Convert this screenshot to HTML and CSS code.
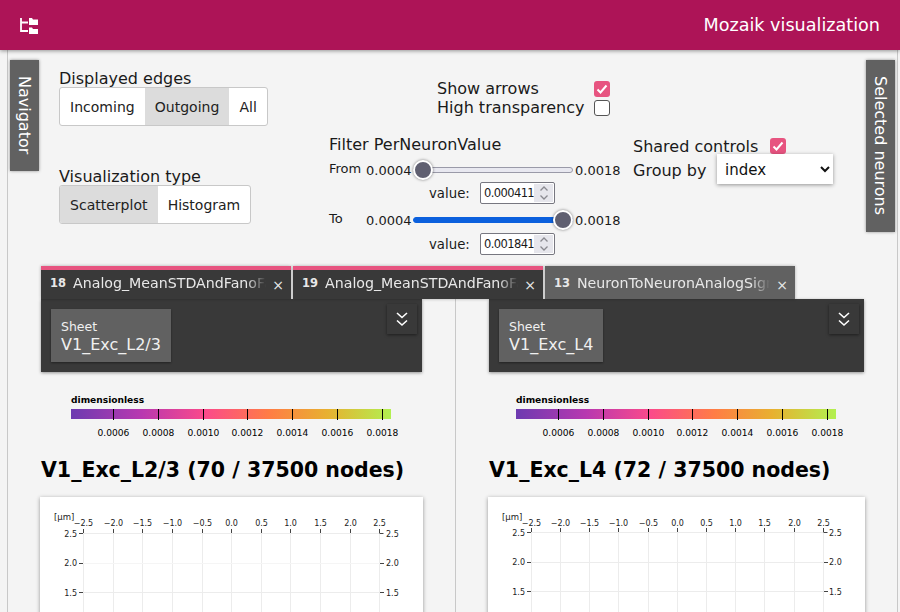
FILE: index.html
```html
<!DOCTYPE html>
<html lang="en">
<head>
    <meta charset="UTF-8">
    <meta name="viewport" content="width=device-width, initial-scale=1.0">
    <title>Mozaik visualization</title>
    <link rel="stylesheet" href="styles.css">
</head>
<body>
    <header class="topbar">
        <svg class="topbar-icon" width="20" height="18" viewBox="0 0 20 18">
            <path d="M2 1v13h7M2 5.500h7" fill="none" stroke="#fff" stroke-width="1.800"/>
            <path d="M10 1h3l1 1.500h5V8H10zM10 10.500h3l1 1.500h5v5H10z" fill="#fff"/>
        </svg>
        <div class="topbar-title">Mozaik visualization</div>
    </header>

    <div class="workspace">
        <div class="rail rail-left"><div class="side-tab">Navigator</div></div>

        <div class="main">
            <div class="controls">
                <div class="controls-col">
                    <div class="control-label">Displayed edges</div>
                    <div class="btn-group">
                        <div class="btn">Incoming</div>
                        <div class="btn active">Outgoing</div>
                        <div class="btn">All</div>
                    </div>
                    <div class="control-label second">Visualization type</div>
                    <div class="btn-group">
                        <div class="btn active">Scatterplot</div>
                        <div class="btn">Histogram</div>
                    </div>
                </div>

                <div class="controls-col filter-col">
                    <div class="check-row">
                        <span class="check-label">Show arrows</span>
                        <span class="checkbox checked"><svg width="16" height="16" viewBox="0 0 16 16"><path d="M3.500 8.500l3 3 6-7" fill="none" stroke="#fff" stroke-width="2"/></svg></span>
                    </div>
                    <div class="check-row">
                        <span class="check-label">High transparency</span>
                        <span class="checkbox"></span>
                    </div>
                    <div class="filter-title">Filter PerNeuronValue</div>

                    <div class="slider-row">
                        <span class="slider-name">From</span>
                        <span class="slider-min">0.0004</span>
                        <div class="slider"><div class="thumb thumb-start"></div></div>
                        <span class="slider-max">0.0018</span>
                    </div>
                    <div class="value-row">
                        <span class="value-label">value:</span>
                        <div class="num-input">
                            <span class="num-text">0.000411</span>
                            <span class="num-spin"><svg width="12" height="18" viewBox="0 0 12 18"><path d="M2.500 6.500L6 3l3.500 3.500M2.500 11.500L6 15l3.500-3.500" fill="none" stroke="#8a8a90" stroke-width="1.300"/></svg></span>
                        </div>
                    </div>

                    <div class="slider-row to-row">
                        <span class="slider-name">To</span>
                        <span class="slider-min">0.0004</span>
                        <div class="slider blue"><div class="thumb thumb-end"></div></div>
                        <span class="slider-max">0.0018</span>
                    </div>
                    <div class="value-row last-value">
                        <span class="value-label">value:</span>
                        <div class="num-input">
                            <span class="num-text">0.001841</span>
                            <span class="num-spin"><svg width="12" height="18" viewBox="0 0 12 18"><path d="M2.500 6.500L6 3l3.500 3.500M2.500 11.500L6 15l3.500-3.500" fill="none" stroke="#8a8a90" stroke-width="1.300"/></svg></span>
                        </div>
                    </div>
                </div>

                <div class="controls-col shared-col">
                    <div class="shared-row">
                        <span>Shared controls</span>
                        <span class="checkbox checked"><svg width="16" height="16" viewBox="0 0 16 16"><path d="M3.500 8.500l3 3 6-7" fill="none" stroke="#fff" stroke-width="2"/></svg></span>
                    </div>
                    <div class="group-row">
                        <span>Group by</span>
                        <select class="group-select"><option>index</option></select>
                    </div>
                </div>
            </div>

            <div class="tabs">
                <div class="tab selected">
                    <span class="tab-num">18</span><span class="tab-title">Analog_MeanSTDAndFanoFactor</span><span class="tab-close">×</span>
                </div>
                <div class="tab selected">
                    <span class="tab-num">19</span><span class="tab-title">Analog_MeanSTDAndFanoFactor</span><span class="tab-close">×</span>
                </div>
                <div class="tab">
                    <span class="tab-num">13</span><span class="tab-title">NeuronToNeuronAnalogSignal</span><span class="tab-close">×</span>
                </div>
            </div>

            <div class="panes">
                <section class="pane pane-first">
                    <div class="pane-head">
                        <div class="sheet-box">
                            <div class="sheet-caption">Sheet</div>
                            <div class="sheet-name">V1_Exc_L2/3</div>
                        </div>
                        <div class="collapse-btn"><svg width="12" height="15" viewBox="0 0 12 15"><path d="M1 1l5 4.500L11 1M1 8.500l5 4.500 5-4.500" fill="none" stroke="#fff" stroke-width="1.600"/></svg></div>
                    </div>
                    <svg class="colorbar" width="382" height="62" viewBox="41 386 382 62">
                        <defs>
                            <linearGradient id="cbar1">
                                <stop offset="0" stop-color="#6d3bb0"/>
                                <stop offset="0.22" stop-color="#b838b0"/>
                                <stop offset="0.42" stop-color="#fb4a8a"/>
                                <stop offset="0.62" stop-color="#ff7d45"/>
                                <stop offset="0.8" stop-color="#e8b030"/>
                                <stop offset="1" stop-color="#b2f050"/>
                            </linearGradient>
                        </defs>
                        <text class="cbar-unit" x="71" y="403">dimensionless</text>
                        <rect x="71" y="409" width="320" height="10" fill="url(#cbar1)"/>
                        <path d="M113.500 409v11M158.500 409v11M203.500 409v11M247.500 409v11M292.500 409v11M337.500 409v11M382.500 409v11" stroke="#000"/>
                        <text class="cbar-tick" x="113.500" y="436">0.0006</text>
                        <text class="cbar-tick" x="158.500" y="436">0.0008</text>
                        <text class="cbar-tick" x="203.500" y="436">0.0010</text>
                        <text class="cbar-tick" x="247.500" y="436">0.0012</text>
                        <text class="cbar-tick" x="292.500" y="436">0.0014</text>
                        <text class="cbar-tick" x="337.500" y="436">0.0016</text>
                        <text class="cbar-tick" x="382.500" y="436">0.0018</text>
                    </svg>
                    <h2 class="pane-title">V1_Exc_L2/3 (70 / 37500 nodes)</h2>
                    <div class="plot-card">
                        <svg class="plot" width="383" height="300" viewBox="40 497 383 300">
                            <path class="grid" d="M83.500 533v280M113.500 533v280M142.500 533v280M172.500 533v280M202.500 533v280M231.500 533v280M261.500 533v280M290.500 533v280M320.500 533v280M350.500 533v280M379.500 533v280M83 533.500h297M83 592.500h297"/>
                            <path class="grid faint" d="M83 563.500h297"/>
                            <path class="axis" d="M83.500 529v4M113.500 529v4M142.500 529v4M172.500 529v4M202.500 529v4M231.500 529v4M261.500 529v4M290.500 529v4M320.500 529v4M350.500 529v4M379.500 529v4M79 533.500h4M79 563.500h4M79 592.500h4M379.500 533.500h4M380 563.500h4M380 592.500h4"/>
                            <text class="plot-unit" x="54" y="520">[μm]</text>
                            <text class="plot-x" x="83.500" y="526">−2.5</text>
                            <text class="plot-x" x="113.500" y="526">−2.0</text>
                            <text class="plot-x" x="142.500" y="526">−1.5</text>
                            <text class="plot-x" x="172.500" y="526">−1.0</text>
                            <text class="plot-x" x="202.500" y="526">−0.5</text>
                            <text class="plot-x" x="231.500" y="526">0.0</text>
                            <text class="plot-x" x="261.500" y="526">0.5</text>
                            <text class="plot-x" x="290.500" y="526">1.0</text>
                            <text class="plot-x" x="320.500" y="526">1.5</text>
                            <text class="plot-x" x="350.500" y="526">2.0</text>
                            <text class="plot-x" x="379.500" y="526">2.5</text>
                            <text class="plot-y" x="77" y="537">2.5</text>
                            <text class="plot-y" x="77" y="566">2.0</text>
                            <text class="plot-y" x="77" y="596">1.5</text>
                            <text class="plot-y2" x="386" y="537">2.5</text>
                            <text class="plot-y2" x="386" y="566">2.0</text>
                            <text class="plot-y2" x="386" y="596">1.5</text>
                        </svg>
                    </div>
                </section>

                <section class="pane">
                    <div class="pane-head">
                        <div class="sheet-box">
                            <div class="sheet-caption">Sheet</div>
                            <div class="sheet-name">V1_Exc_L4</div>
                        </div>
                        <div class="collapse-btn"><svg width="12" height="15" viewBox="0 0 12 15"><path d="M1 1l5 4.500L11 1M1 8.500l5 4.500 5-4.500" fill="none" stroke="#fff" stroke-width="1.600"/></svg></div>
                    </div>
                    <svg class="colorbar" width="375" height="62" viewBox="489 386 375 62">
                        <defs>
                            <linearGradient id="cbar2">
                                <stop offset="0" stop-color="#6d3bb0"/>
                                <stop offset="0.22" stop-color="#b838b0"/>
                                <stop offset="0.42" stop-color="#fb4a8a"/>
                                <stop offset="0.62" stop-color="#ff7d45"/>
                                <stop offset="0.8" stop-color="#e8b030"/>
                                <stop offset="1" stop-color="#b2f050"/>
                            </linearGradient>
                        </defs>
                        <text class="cbar-unit" x="516" y="403">dimensionless</text>
                        <rect x="516" y="409" width="320" height="10" fill="url(#cbar2)"/>
                        <path d="M558.500 409v11M603.500 409v11M648.500 409v11M692.500 409v11M737.500 409v11M782.500 409v11M827.500 409v11" stroke="#000"/>
                        <text class="cbar-tick" x="558.500" y="436">0.0006</text>
                        <text class="cbar-tick" x="603.500" y="436">0.0008</text>
                        <text class="cbar-tick" x="648.500" y="436">0.0010</text>
                        <text class="cbar-tick" x="692.500" y="436">0.0012</text>
                        <text class="cbar-tick" x="737.500" y="436">0.0014</text>
                        <text class="cbar-tick" x="782.500" y="436">0.0016</text>
                        <text class="cbar-tick" x="827.500" y="436">0.0018</text>
                    </svg>
                    <h2 class="pane-title">V1_Exc_L4 (72 / 37500 nodes)</h2>
                    <div class="plot-card">
                        <svg class="plot" width="377" height="300" viewBox="488 497 377 300">
                            <path class="grid" d="M531.500 532v280M560.500 532v280M589.500 532v280M618.500 532v280M648.500 532v280M677.500 532v280M706.500 532v280M735.500 532v280M764.500 532v280M794.500 532v280M823.500 532v280M531 532.500h293M531 562.500h293M531 591.500h293"/>
                            <path class="axis" d="M531.500 528v4M560.500 528v4M589.500 528v4M618.500 528v4M648.500 528v4M677.500 528v4M706.500 528v4M735.500 528v4M764.500 528v4M794.500 528v4M823.500 528v4M527 532.500h4M527 562.500h4M527 591.500h4M823.500 532.500h4M824 562.500h4M824 591.500h4"/>
                            <text class="plot-unit" x="502" y="520">[μm]</text>
                            <text class="plot-x" x="531.500" y="526">−2.5</text>
                            <text class="plot-x" x="560.500" y="526">−2.0</text>
                            <text class="plot-x" x="589.500" y="526">−1.5</text>
                            <text class="plot-x" x="618.500" y="526">−1.0</text>
                            <text class="plot-x" x="648.500" y="526">−0.5</text>
                            <text class="plot-x" x="677.500" y="526">0.0</text>
                            <text class="plot-x" x="706.500" y="526">0.5</text>
                            <text class="plot-x" x="735.500" y="526">1.0</text>
                            <text class="plot-x" x="764.500" y="526">1.5</text>
                            <text class="plot-x" x="794.500" y="526">2.0</text>
                            <text class="plot-x" x="823.500" y="526">2.5</text>
                            <text class="plot-y" x="525" y="536">2.5</text>
                            <text class="plot-y" x="525" y="565">2.0</text>
                            <text class="plot-y" x="525" y="595">1.5</text>
                            <text class="plot-y2" x="829" y="536">2.5</text>
                            <text class="plot-y2" x="829" y="565">2.0</text>
                            <text class="plot-y2" x="829" y="595">1.5</text>
                        </svg>
                    </div>
                </section>
            </div>
        </div>

        <div class="rail rail-right"><div class="side-tab">Selected neurons</div></div>
    </div>
</body>
</html>
```

FILE: styles.css
```css
html, body {
    height: 100%;
    overflow: hidden;
}

body {
    margin: 0;
    background-color: #f4f4f4;
    color: #1a1a1a;
    font-family: "DejaVu Sans", Verdana, sans-serif;
    font-size: 16px;
}

/* Top bar */
.topbar {
    position: relative;
    z-index: 2;
    height: 50px;
    display: flex;
    align-items: center;
    justify-content: space-between;
    padding: 0 20px 0 19px;
    box-sizing: border-box;
    background-color: #ad1457;
    box-shadow: 0 1px 4px rgba(0, 0, 0, 0.4);
}

.topbar-icon {
    display: block;
    margin-top: 2px;
}

.topbar-title {
    color: #ffffff;
    font-size: 17.600px;
}

/* Workspace with the two side rails */
.workspace {
    display: flex;
    height: 562px;
    margin: 0 2px 0 7px;
    border-left: 1px solid #c8c8c8;
    border-right: 1px solid #c8c8c8;
}

.rail {
    flex: none;
    padding-top: 10px;
}

.rail-left {
    width: 31px;
    padding-left: 2px;
}

.rail-right {
    width: 31px;
    padding-left: 2px;
    box-sizing: border-box;
}

.side-tab {
    box-sizing: border-box;
    width: 29px;
    padding: 16px 0 17px;
    background-color: #616161;
    color: #ffffff;
    writing-mode: vertical-rl;
    line-height: 29px;
    box-shadow: 0 0 3px rgba(0, 0, 0, 0.4);
}

.main {
    flex: none;
    width: 823px;
}

/* Controls block */
.controls {
    display: grid;
    grid-template-columns: 270px 304px 1fr;
    height: 216px;
    padding-left: 18px;
}

.control-label {
    margin-top: 20px;
    line-height: 17px;
}

.control-label.second {
    margin-top: 42px;
}

.btn-group {
    display: inline-flex;
    align-self: flex-start;
    background-color: #ffffff;
    border: 1px solid #c8c8c8;
    border-radius: 3px;
    overflow: hidden;
}

.btn {
    padding: 1px 10.100px 0;
    line-height: 36px;
    font-size: 14px;
    color: #222222;
}

.btn.active {
    background-color: #dcdcdc;
}

.controls-col {
    display: flex;
    flex-direction: column;
}

.filter-col {
    padding-top: 29px;
}

.check-row {
    display: flex;
    align-items: center;
    height: 19px;
    padding-left: 108px;
}

.check-label {
    width: 157px;
}

.checkbox {
    box-sizing: border-box;
    width: 16px;
    height: 16px;
    border: 1px solid #555555;
    border-radius: 3px;
    background-color: #ffffff;
    overflow: hidden;
}

.checkbox.checked {
    border: none;
    background-color: #e75480;
}

.checkbox svg {
    display: block;
}

.filter-title {
    margin-top: 18px;
    line-height: 20px;
}

.slider-row {
    display: flex;
    align-items: center;
    height: 20px;
    margin-top: 5px;
    font-size: 13px;
}

.to-row {
    margin-top: 6px;
}

.slider-name {
    width: 37px;
    margin-top: -3px;
}

.slider-min {
    width: 47px;
}

.slider {
    position: relative;
    box-sizing: border-box;
    width: 160px;
    height: 6px;
    margin-right: 2px;
    background-color: #e8e8f0;
    border: 1px solid #9a9aa8;
    border-radius: 3px;
}

.slider.blue {
    background-color: #0b60dd;
    border-color: #0b60dd;
}

.thumb {
    position: absolute;
    top: -8px;
    box-sizing: border-box;
    width: 20px;
    height: 20px;
    border: 2px solid #ffffff;
    border-radius: 50%;
    background-color: #5f5f70;
    box-shadow: 0 0 3px rgba(0, 0, 0, 0.5);
}

.thumb-start {
    left: -1px;
}

.thumb-end {
    right: -1px;
}

.value-row {
    display: flex;
    align-items: center;
    height: 22px;
    margin-top: 2px;
    padding-left: 100px;
    font-size: 13.300px;
}

.value-row.last-value {
    margin-top: 3px;
}

.value-label {
    width: 51px;
}

.num-input {
    box-sizing: border-box;
    display: flex;
    width: 75px;
    height: 22px;
    padding: 1px 1px 1px 3px;
    border: 1px solid #777780;
    border-radius: 2px;
    background-color: #ffffff;
    font-size: 11.500px;
    letter-spacing: -0.600px;
}

.num-text {
    width: 50px;
    overflow: hidden;
    line-height: 18px;
    white-space: nowrap;
}

.num-spin {
    width: 19px;
    height: 18px;
    display: flex;
    justify-content: center;
    background-color: #e6e6ec;
}

.shared-col {
    padding-top: 87px;
}

.shared-row {
    display: flex;
    align-items: center;
    gap: 12px;
    height: 18px;
}

.group-row {
    display: flex;
    align-items: center;
    margin-top: -1px;
}

.group-row span {
    width: 84px;
    padding-top: 2px;
}

.group-select {
    box-sizing: border-box;
    width: 116px;
    height: 30px;
    padding: 2px 0 0 4px;
    border: none;
    background-color: #ffffff;
    color: #111111;
    font-family: "DejaVu Sans", Verdana, sans-serif;
    font-size: 15px;
    box-shadow: 0 1px 4px rgba(0, 0, 0, 0.4);
}

/* Tabs */
.tabs {
    position: relative;
    z-index: 1;
    display: flex;
    gap: 2px;
}

.tab {
    box-sizing: border-box;
    display: flex;
    align-items: center;
    width: 250px;
    height: 33px;
    padding: 4px 7px 3px 9px;
    background-color: #616161;
    color: #e8e8e8;
    font-size: 14.200px;
    box-shadow: 0 0 3px rgba(0, 0, 0, 0.3);
}

.tab.selected {
    border-top: 4px solid #e75480;
    padding-top: 0;
    background-color: #393939;
}

.tab-num {
    flex: none;
    width: 23px;
    font-size: 11.500px;
    font-weight: bold;
}

.tab-title {
    flex: 1;
    overflow: hidden;
    white-space: nowrap;
    -webkit-mask-image: linear-gradient(to right, #000 90%, transparent);
    mask-image: linear-gradient(to right, #000 90%, transparent);
}

.tab-close {
    flex: none;
    width: 18px;
    margin-top: 3px;
    text-align: right;
    font-size: 14px;
}

/* The two sheet panes */
.panes {
    display: flex;
}

.pane {
    flex: 1;
    min-width: 0;
}

.pane-first {
    flex: none;
    box-sizing: border-box;
    width: 415px;
    margin-right: 33px;
    padding-right: 33px;
    border-right: 1px solid #c8c8c8;
}

.pane-head {
    display: flex;
    justify-content: space-between;
    align-items: flex-start;
    height: 73px;
    box-sizing: border-box;
    padding: 5px 5px 0 10px;
    background-color: #393939;
    box-shadow: 0 1px 3px rgba(0, 0, 0, 0.4);
}

.sheet-box {
    margin-top: 5px;
    height: 53px;
    box-sizing: border-box;
    padding: 9px 10px 0;
    background-color: #616161;
    color: #f0f0f0;
    box-shadow: 0 1px 2px rgba(0, 0, 0, 0.4);
}

.sheet-caption {
    font-size: 12.500px;
    line-height: 17px;
}

.sheet-name {
    font-size: 16px;
    line-height: 19px;
}

.collapse-btn {
    display: flex;
    align-items: center;
    justify-content: center;
    width: 30px;
    height: 30px;
    background-color: #393939;
    box-shadow: 0 1px 3px rgba(0, 0, 0, 0.5);
}

.colorbar {
    display: block;
    margin-top: 14px;
}

.cbar-unit {
    font-size: 9.100px;
    font-weight: bold;
}

.cbar-tick {
    font-size: 9.100px;
    text-anchor: middle;
}

.pane-title {
    margin: 10px 0 0;
    color: #000000;
    font-size: 20.500px;
    line-height: 25px;
    white-space: nowrap;
}

.plot-card {
    margin: 14px -1px 0;
    height: 300px;
    background-color: #ffffff;
    box-shadow: 0 1px 4px rgba(0, 0, 0, 0.4);
}

.plot {
    display: block;
}

.grid {
    fill: none;
    stroke: #ececec;
}

.grid.faint {
    stroke: #f5f5f5;
}

.axis {
    fill: none;
    stroke: #444444;
}

.plot-unit, .plot-x, .plot-y, .plot-y2 {
    font-size: 8px;
    fill: #222222;
}

.plot-unit {
    font-size: 8.500px;
}

.plot-x {
    text-anchor: middle;
}

.plot-y {
    text-anchor: end;
}
```
